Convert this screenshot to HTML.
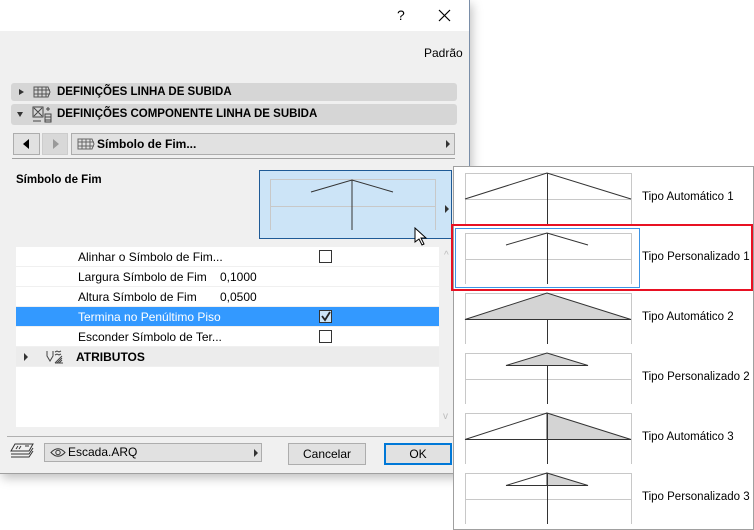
<!DOCTYPE html>
<html><head><meta charset="utf-8"><style>
*{box-sizing:border-box;margin:0;padding:0}
body{width:754px;height:530px;background:#fff;position:relative;overflow:hidden;font-family:"Liberation Sans",sans-serif;font-size:12px;color:#000}
.a{position:absolute}
.dlg{left:0;top:0;width:470px;height:474px;background:#f0f0f0;border-right:1px solid #7a8ea8;border-bottom:1px solid #a0a0a0;box-shadow:2px 4px 10px rgba(0,0,0,.25)}
.hdr{background:#d6d6d6;border-radius:3px;font-weight:bold;font-size:11.5px;line-height:20px}
.btn{background:#e1e1e1;border:1px solid #adadad}
.row{position:absolute;left:0;width:423px;height:20px;line-height:20px;border-bottom:1px solid #f0f0f0}
.row span{position:absolute}
.cb{position:absolute;left:303px;top:3px;width:13px;height:13px;border:1px solid #333;background:#fff}
.lbl{font-size:11.5px}
</style></head><body>
<div class="a dlg">
 <div class="a" style="left:0;top:0;width:469px;height:31px;background:#fff"></div>
 <div class="a" style="left:397px;top:7px;font-size:14px">?</div>
 <svg class="a" style="left:438px;top:9px" width="13" height="13"><path d="M1 1L12 12M12 1L1 12" stroke="#000" stroke-width="1.2"/></svg>
 <div class="a" style="left:424px;top:46px">Padrão</div>
 <div class="a hdr" style="left:11px;top:83px;width:446px;height:18px;line-height:18px">
  <span class="a" style="left:8px;top:6px;border-left:5px solid #333;border-top:3.5px solid transparent;border-bottom:3.5px solid transparent"></span>
  <svg class="a" style="left:22px;top:3px" width="18" height="12"><path d="M1 1h14l2 5-2 5H1z M1 4h16 M1 8h16 M5 1v10 M9 1v10 M13 1v10" fill="none" stroke="#555"/></svg>
  <span class="a" style="left:46px">DEFINIÇÕES LINHA DE SUBIDA</span></div>
 <div class="a hdr" style="left:11px;top:104px;width:446px;height:21px;line-height:21px">
  <span class="a" style="left:6px;top:8px;border-top:5px solid #333;border-left:3.5px solid transparent;border-right:3.5px solid transparent"></span>
  <svg class="a" style="left:21px;top:2px" width="20" height="18"><path d="M1 1h10v10H1z M2 2l8 8M10 2l-8 8 M13 8h6v8h-6z M13 11h6M13 14h6 M1 15h8 M14 3h4M16 1v4" fill="none" stroke="#444"/></svg>
  <span class="a" style="left:46px">DEFINIÇÕES COMPONENTE LINHA DE SUBIDA</span></div>
 <div class="a btn" style="left:13px;top:133px;width:27px;height:22px"><span class="a" style="left:9px;top:5px;border-right:6px solid #000;border-top:5px solid transparent;border-bottom:5px solid transparent"></span></div>
 <div class="a" style="left:42px;top:133px;width:26px;height:22px;background:#d8d8d8;border:1px solid #ccc"><span class="a" style="left:10px;top:5px;border-left:6px solid #999;border-top:5px solid transparent;border-bottom:5px solid transparent"></span></div>
 <div class="a btn" style="left:71px;top:133px;width:384px;height:22px;font-weight:bold;line-height:20px">
  <svg class="a" style="left:5px;top:4px" width="18" height="12"><path d="M1 1h14l2 5-2 5H1z M1 4h16 M1 8h16 M5 1v10 M9 1v10 M13 1v10" fill="none" stroke="#666"/></svg>
  <span class="a" style="left:25px">Símbolo de Fim...</span>
  <span class="a" style="left:374px;top:6px;border-left:4px solid #333;border-top:4px solid transparent;border-bottom:4px solid transparent"></span></div>
 <div class="a" style="left:12px;top:158px;width:443px;height:1px;background:#a0a0a0"></div>
 <div class="a" style="left:16px;top:174px;font-weight:bold;font-size:11.5px">Símbolo de Fim</div>
 <div class="a" style="left:259px;top:170px;width:193px;height:69px;background:#cce4f7;border:1px solid #1e5a96">
  <svg class="a" style="left:0;top:0" width="192" height="68"><path d="M10.5 8v51M175.5 8v51M10 8.5h166M10 35.5h166" fill="none" stroke="#c8c8c8"/><path d="M92 39M51 21L92 9L133 21M92 9v50" fill="none" stroke="#333"/><path d="M185 34l4 4-4 4z" fill="#333"/></svg></div>
 <svg class="a" style="left:414px;top:227px" width="16" height="20"><path d="M1 1v14l4-3 3 6 2-1-3-6h5z" fill="#fff" stroke="#000"/></svg>
 <div class="a" style="left:16px;top:247px;width:423px;height:180px;background:#fff">
  <div class="row" style="top:0"><span style="left:62px">Alinhar o Símbolo de Fim...</span><div class="cb"></div></div>
  <div class="row" style="top:20px"><span style="left:62px">Largura Símbolo de Fim</span><span style="left:204px">0,1000</span></div>
  <div class="row" style="top:40px"><span style="left:62px">Altura Símbolo de Fim</span><span style="left:204px">0,0500</span></div>
  <div class="row" style="top:60px;background:#3399ff;color:#fff"><span style="left:62px">Termina no Penúltimo Piso</span><div class="cb" style="background:#cce4f7"><svg width="11" height="11" style="position:absolute;left:0;top:0"><path d="M2 5l3 4 5-8" fill="none" stroke="#222" stroke-width="1.8"/></svg></div></div>
  <div class="row" style="top:80px"><span style="left:62px">Esconder Símbolo de Ter...</span><div class="cb"></div></div>
  <div class="row" style="top:100px;background:#ececec;font-weight:bold"><span style="left:8px;top:6px;border-left:4px solid #333;border-top:4px solid transparent;border-bottom:4px solid transparent"></span><svg style="position:absolute;left:30px;top:3px" width="18" height="14"><path d="M1 1v5l3 5 3-5V1 M9 2l2-1 2 1 2-1M9 5l2-1 2 1 2-1 M9 13l7-7M11 13l5-5M13 13l3-3M9 13h8" fill="none" stroke="#444"/></svg><span style="left:60px">ATRIBUTOS</span></div>
 </div>
 <div class="a" style="left:444px;top:250px;color:#bbb;font-size:10px">^</div>
 <div class="a" style="left:443px;top:411px;color:#bbb;font-size:10px">v</div>
 <div class="a" style="left:7px;top:436px;width:446px;height:1px;background:#b0b0b0"></div>
 <svg class="a" style="left:9px;top:443px" width="26" height="18"><path d="M6 1h18l-4 7H2z M2 8h18M2 11h18l4-6M2 14h18l4-6M9 3l-2 3M12 3l-2 3M16 3h4" fill="none" stroke="#333"/></svg>
 <div class="a btn" style="left:44px;top:443px;width:218px;height:19px;line-height:17px">
  <svg class="a" style="left:5px;top:3px" width="16" height="11"><path d="M1 5.5Q8 -2 15 5.5Q8 13 1 5.5z" fill="none" stroke="#333"/><circle cx="8" cy="5.5" r="2.2" fill="none" stroke="#333"/></svg>
  <span class="a" style="left:23px">Escada.ARQ</span>
  <span class="a" style="left:209px;top:5px;border-left:4px solid #333;border-top:4px solid transparent;border-bottom:4px solid transparent"></span></div>
 <div class="a btn" style="left:288px;top:443px;width:78px;height:22px;text-align:center;line-height:20px">Cancelar</div>
 <div class="a btn" style="left:384px;top:443px;width:68px;height:22px;text-align:center;line-height:18px;border:2px solid #0078d7">OK</div>
</div>
<div class="a" style="left:453px;top:166px;width:301px;height:364px;background:#fff;border:1px solid #a0a0a0"></div>
<svg class="a" style="left:0;top:0" width="754" height="530">
 <g fill="none" stroke="#c8c8c8">
  <path d="M465.5 173v51M631.5 173v51M465 173.5h167M465 199.5h167"/>
  <path d="M465.5 233v51M631.5 233v51M465 233.5h167M465 259.5h167"/>
  <path d="M465.5 293v51M631.5 293v51M465 293.5h167M465 319.5h167"/>
  <path d="M465.5 353v51M631.5 353v51M465 353.5h167M465 379.5h167"/>
  <path d="M465.5 413v51M631.5 413v51M465 413.5h167M465 439.5h167"/>
  <path d="M465.5 473v51M631.5 473v51M465 473.5h167M465 499.5h167"/>
 </g>
 <g stroke="#333" stroke-width="1">
  <path d="M465 199L547 173L631 199M547.5 173v51" fill="none"/>
  <path d="M506 245L547 233L588 245M547.5 233v51" fill="none"/>
  <path d="M465 319.5L547 293L631 319.5z" fill="#d4d4d4"/><path d="M547.5 319v25"/>
  <path d="M506 365.5L547 353L588 365.5z" fill="#d4d4d4"/><path d="M547.5 365v39"/>
  <path d="M547 413L631 439.5H547z" fill="#d4d4d4"/><path d="M465 439.5L547 413M465 439.5h82M547.5 413v51" fill="none"/>
  <path d="M547 473L588 485.5H547z" fill="#d4d4d4"/><path d="M506 485.5L547 473M506 485.5h41M547.5 473v51" fill="none"/>
 </g>
 <rect x="455.5" y="228.5" width="184" height="59" fill="none" stroke="#3c94e6"/>
 <rect x="452" y="225" width="300" height="65" fill="none" stroke="#e81123" stroke-width="2"/>
</svg>
<div class="a lbl" style="left:642px;top:191px">Tipo Automático 1</div>
<div class="a lbl" style="left:642px;top:251px">Tipo Personalizado 1</div>
<div class="a lbl" style="left:642px;top:311px">Tipo Automático 2</div>
<div class="a lbl" style="left:642px;top:371px">Tipo Personalizado 2</div>
<div class="a lbl" style="left:642px;top:431px">Tipo Automático 3</div>
<div class="a lbl" style="left:642px;top:491px">Tipo Personalizado 3</div>
</body></html>
